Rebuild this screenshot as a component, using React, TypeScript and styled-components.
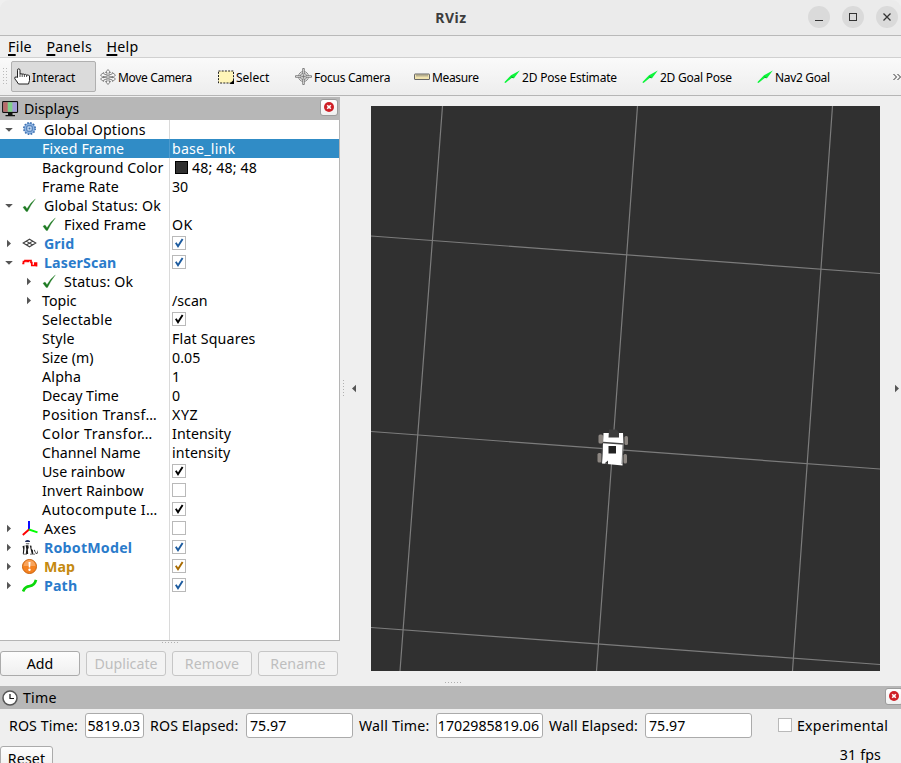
import React from "react";
import styled, { createGlobalStyle, css } from "styled-components";

const GlobalStyle = createGlobalStyle`
  *, *::before, *::after { box-sizing: border-box; }
  body {
    margin: 0;
    overflow: hidden;
    background: #efefef;
    color: #000;
    font-family: "Noto Sans", "Open Sans", sans-serif;
    font-size: 14.2px;
    line-height: 19px;
  }
  svg { display: block; flex: none; }
`;

const Window = styled.div`
  width: 901px;
  height: 763px;
  display: flex;
  flex-direction: column;
  overflow: hidden;
  white-space: nowrap;
`;

const Label = styled.span<{ $ls?: number }>`
  letter-spacing: ${(p) => p.$ls ?? 0}px;
`;

/* ---------- title bar ---------- */
const TitleBar = styled.header`
  height: 36px;
  flex: none;
  display: grid;
  grid-template-columns: 1fr auto 1fr;
  align-items: center;
  background: #ebebeb;
  border-bottom: 1px solid #b9b9b9;
  border-radius: 9px 9px 0 0;
`;
const Title = styled.h1`
  grid-column: 2;
  margin: 0;
  padding-left: 1px;
  font-size: 14px;
  font-weight: 700;
  letter-spacing: 0.5px;
  color: #3d3d3d;
`;
const WindowButtons = styled.div`
  display: flex;
  justify-content: flex-end;
  gap: 12px;
  padding: 0 3px 1px 0;
`;
const WindowButton = styled.button`
  width: 22px;
  height: 22px;
  padding: 0;
  border: 0;
  border-radius: 50%;
  background: #dadada;
`;

/* ---------- menu bar ---------- */
const MenuBar = styled.nav`
  height: 22px;
  flex: none;
  display: flex;
  align-items: center;
  gap: 14.5px;
  padding-left: 8px;
  background: #efefef;
  border-bottom: 1px solid #d0d0d0;
`;
const MenuItem = styled.span`
  letter-spacing: 0.3px;
  &::first-letter {
    text-decoration: underline;
    text-decoration-thickness: 1.5px;
    text-underline-offset: 2px;
  }
`;

/* ---------- tool bar ---------- */
const ToolBar = styled.div`
  height: 38px;
  flex: none;
  display: flex;
  align-items: center;
  background: linear-gradient(#fafafa, #ededed);
  border-bottom: 1px solid #b5b5b5;
  font-size: 12px;
  line-height: 16px;
`;
const Handle = styled.div`
  width: 4px;
  height: 17px;
  margin: 0 4px 0 3px;
  background: radial-gradient(circle at 0.5px 0.5px, #bbb 0.6px, transparent 0.9px) 0 0 / 3px 3px;
`;
const Tool = styled.button<{ $width: number; $active?: boolean; $ls?: number }>`
  width: ${(p) => p.$width}px;
  height: 31px;
  flex: none;
  display: flex;
  align-items: center;
  gap: 2px;
  padding: 0 0 0 3px;
  border: 1px solid transparent;
  border-radius: 2px;
  background: transparent;
  color: #000;
  font: inherit;
  letter-spacing: ${(p) => p.$ls ?? 0}px;
  ${(p) => p.$active && css`
    gap: 1px;
    padding-left: 2px;
    background: #dbdbdb;
    border-color: #b0b0b0;
  `}
`;
const ToolText = styled.span`
  padding-top: 2px;
`;
const Overflow = styled.div`
  margin-left: auto;
  margin-right: -1px;
`;

/* ---------- central area ---------- */
const Main = styled.main`
  height: 590px;
  flex: none;
  display: flex;
`;
const Dock = styled.section`
  width: 340px;
  flex: none;
  padding-top: 1px;
`;
const DockHeader = styled.div`
  height: 23px;
  display: flex;
  align-items: center;
  gap: 5px;
  padding-left: 2px;
  background: #b7b7b7;
`;
const CloseButton = styled.button<{ $right: number }>`
  width: 18px;
  height: 17px;
  display: grid;
  place-items: center;
  padding: 0;
  margin: 0 ${(p) => p.$right}px 3px auto;
  border: 1px solid #9c9c9c;
  border-radius: 3px;
  background: linear-gradient(#fff, #f0f0f0);
`;
const Tree = styled.div`
  height: 521px;
  display: flex;
  flex-direction: column;
  background: linear-gradient(90deg, transparent 169px, #dadada 169px, #dadada 170px, transparent 170px) #fff;
  border-right: 1px solid #b5b5b5;
  border-bottom: 1px solid #b5b5b5;
`;
const Row = styled.div<{ $selected?: boolean }>`
  height: 19px;
  flex: none;
  display: grid;
  grid-template-columns: 169px 1fr;
  ${(p) => p.$selected && css`
    background: linear-gradient(90deg, transparent 169px, #4c9ace 169px, #4c9ace 170px, transparent 170px) #308cc6;
    color: #fff;
  `}
`;
const NameCell = styled.div<{ $indent: number; $color?: string; $ls?: number }>`
  display: flex;
  align-items: center;
  padding-left: ${(p) => p.$indent}px;
  letter-spacing: ${(p) => p.$ls ?? 0}px;
  ${(p) => p.$color && css`color: ${p.$color}; font-weight: 700;`}
`;
const Arrow = styled.span`
  width: 18px;
  flex: none;
`;
const IconSlot = styled.span`
  width: 22px;
  flex: none;
`;
const ValueCell = styled.div<{ $ls?: number }>`
  display: flex;
  align-items: center;
  gap: 4px;
  padding-left: 3px;
  letter-spacing: ${(p) => p.$ls ?? 0}px;
`;
const Swatch = styled.span`
  width: 13px;
  height: 13px;
  margin-left: 3px;
  border: 1px solid #000;
  background: #303030;
`;
const CheckBox = styled.span`
  width: 14px;
  height: 14px;
  flex: none;
  margin-bottom: 1px;
  border: 1px solid #b9b9b9;
  background: #fff;
`;
const Dots = styled.div<{ $left: number; $top: number }>`
  width: 17px;
  height: 1px;
  margin: ${(p) => p.$top}px 0 0 ${(p) => p.$left}px;
  background: repeating-linear-gradient(90deg, #b0b0b0 0 1px, transparent 1px 3px);
`;
const ButtonRow = styled.div`
  display: flex;
  gap: 6px;
  margin-top: 8px;
`;
const PushButton = styled.button<{ $width: number; $ls?: number }>`
  width: ${(p) => p.$width}px;
  height: 25px;
  flex: none;
  padding: 0;
  border: 1px solid #ababab;
  border-radius: 3px;
  background: linear-gradient(#fdfdfd, #efefef);
  color: #000;
  font: inherit;
  letter-spacing: ${(p) => p.$ls ?? 0}px;
  &:disabled { color: #bebebe; border-color: #c6c6c6; background: #f3f3f3; }
`;
const Gutter = styled.div<{ $width: number }>`
  width: ${(p) => p.$width}px;
  flex: none;
  display: flex;
  align-items: center;
  justify-content: flex-end;
  padding-bottom: 5px;
`;
const SideDots = styled.div`
  width: 1px;
  height: 17px;
  margin-right: 6px;
  background: repeating-linear-gradient(#b0b0b0 0 1px, transparent 1px 3px);
`;
const Center = styled.div`
  width: 509px;
  flex: none;
  padding-top: 10px;
`;

/* ---------- time panel ---------- */
const TimePanel = styled.section`
  flex: 1;
`;
const TimeRow = styled.div`
  height: 25px;
  display: flex;
  align-items: center;
  margin-top: 4px;
  padding-left: 9px;
`;
const FieldLabel = styled.label<{ $width: number; $ls?: number }>`
  width: ${(p) => p.$width}px;
  flex: none;
  letter-spacing: ${(p) => p.$ls ?? 0}px;
`;
const Field = styled.div<{ $width: number; $end?: boolean; $ls?: number }>`
  width: ${(p) => p.$width}px;
  height: 25px;
  flex: none;
  display: flex;
  align-items: center;
  justify-content: ${(p) => (p.$end ? "flex-end" : "flex-start")};
  margin-right: 6px;
  padding: 0 3px;
  border: 1px solid #ababab;
  border-radius: 3px;
  background: #fff;
  overflow: hidden;
  letter-spacing: ${(p) => p.$ls ?? 0}px;
`;
const ExperimentalBox = styled.div`
  display: flex;
  align-items: center;
  gap: 5px;
  margin-left: 20px;
`;
const StatusRow = styled.div`
  height: 17px;
  display: flex;
  justify-content: space-between;
  align-items: flex-start;
  line-height: 17px;
  padding-right: 20px;
  margin-top: 8px;
`;

/* ---------- icons ---------- */
const HandIcon = () => (
  <svg width="17" height="17" viewBox="0 0 17 17" fill="#fff" stroke="#222" strokeWidth="1">
    <path d="M3.500 9.500V2.200Q3.500.8 4.700.8T6 2.200V6q1-.8 2 .2 1.200-.7 2.200.3 1.200-.6 2.300.5Q15 6.500 15.500 8v4.500L14.500 16H4.500L2.500 13 .8 10.800Q.3 8.500 2.300 9z" />
    <path d="M6 6v3M8.200 6.300V9M10.400 6.600V9M12.600 7v2" strokeWidth=".8" />
  </svg>
);
const MoveIcon = () => (
  <svg width="16" height="16" viewBox="0 0 16 16" fill="#f6f6f6" stroke="#777" strokeWidth=".9">
    <path d="M8 .5 10.500 3.500H9v2.700l3.300-1.400V3.500L15.500 6l-3 3V7.500L10 8l2.500.8V7.500L15.500 10l-3 2.500-.2-1.500L9 9.800v2.700h1.500L8 15.500 5.500 12.500H7V9.800L3.700 11l-.2 1.500L.5 10l3-2.500v1.300L6 8l-2.500-.5V9l-3-3 3.200-2.500v1.300L7 6.200V3.500H5.500z" />
    <circle cx="8" cy="8" r="1.400" />
  </svg>
);
const SelectIcon = () => (
  <svg width="16" height="14" viewBox="0 0 16 14">
    <rect x=".5" y="1" width="15" height="12" fill="#fff5b8" stroke="#222" strokeDasharray="2 1.200" />
    <path d="M16 9.500V14h-4.500z" />
  </svg>
);
const FocusIcon = () => (
  <svg width="17" height="17" viewBox="0 0 17 17" fill="none" stroke="#777" strokeWidth=".9">
    <circle cx="8.500" cy="8.500" r="5" />
    <circle cx="8.500" cy="8.500" r="3.200" />
    <path d="M7.700 .5h1.600v5.700H7.700zM7.700 10.800h1.600v5.700H7.700zM.5 7.700h5.700v1.600H.5zM10.800 7.700h5.700v1.600h-5.700z" fill="#f5f5f5" />
    <circle cx="8.500" cy="8.500" r="1" fill="#777" />
  </svg>
);
const RulerIcon = () => (
  <svg width="16" height="16" viewBox="0 0 16 16">
    <rect x=".5" y="5" width="15" height="5.500" rx=".5" fill="#f0e3ae" stroke="#666" />
    <path d="M3 5.500v2M5 5.500v2M7 5.500v2M9 5.500v2M11 5.500v2M13 5.500v2" stroke="#666" strokeWidth=".8" />
  </svg>
);
const PoseIcon = () => (
  <svg width="16" height="16" viewBox="0 0 16 16">
    <path d="M.3 13.200 7 6.200 15.800 1.500 10 9.300 8.300 8.500 1.500 14z" fill="#0cf53a" />
    <path d="M7.500 7.300 10 9.300 8.300 8.900 7.300 8.200z" fill="#0a8a25" />
  </svg>
);
const MonitorIcon = () => (
  <svg width="17" height="17" viewBox="0 0 17 17">
    <rect x=".7" y="1.700" width="14.800" height="10.600" rx=".5" stroke="#111" strokeWidth="1.200" fill="#aaa" />
    <rect x="1.300" y="2.300" width="4.500" height="9.400" fill="#b86a6a" />
    <rect x="5.800" y="2.300" width="4.700" height="9.400" fill="#7fd18a" />
    <rect x="10.500" y="2.300" width="4.500" height="9.400" fill="#a29bd8" />
    <path d="M6 13h4.500v2H13v1.300H3.500V15H6z" fill="#111" />
  </svg>
);
const CloseIcon = () => (
  <svg width="12" height="12" viewBox="0 0 12 12">
    <circle cx="6" cy="6" r="5" fill="#cf2027" />
    <path d="M4.200 4.200 7.800 7.800M7.800 4.200 4.200 7.800" stroke="#fff" strokeWidth="1.600" />
  </svg>
);
const GearIcon = () => (
  <svg width="15" height="17" viewBox="0 0 15 17">
    <circle cx="7.500" cy="7.500" r="5.700" fill="#82abdc" stroke="#3f71b0" strokeWidth="1.600" strokeDasharray="1.600 1.380" />
    <circle cx="7.500" cy="7.500" r="4.600" fill="#8fb5e3" />
    <rect x="4.800" y="4.800" width="5.400" height="5.400" rx="1.200" fill="#c4daf2" stroke="#3f71b0" />
    <circle cx="7.500" cy="7.500" r="1" fill="#3f71b0" />
  </svg>
);
const OkIcon = () => (
  <svg width="14" height="15" viewBox="0 0 14 15">
    <path d="M1 9.300 3 8l2 2.700Q8 5 13.300 1 8.800 6.500 5.500 13.500H4.200z" fill="#1d7a22" stroke="#1d7a22" strokeWidth=".3" />
  </svg>
);
const GridIcon = () => (
  <svg width="15" height="15" viewBox="0 0 15 15" fill="none" stroke="#444" strokeWidth="1.100">
    <path d="M1.200 7 7.500 3.200 13.800 7 7.500 10.800zM4.200 5.100l6.500 3.900M10.800 5.100l-6.500 3.900" />
  </svg>
);
const LaserIcon = () => (
  <svg width="17" height="15" viewBox="0 0 17 15" fill="none" stroke="#f00" strokeWidth="1.700">
    <path d="M.3 8.500H1.500V6.500H3V5.500H5V6.500H6.500V5.500H9V7.500H9.800V10.500H12.800V8H14.500V11.500" />
  </svg>
);
const AxesIcon = () => (
  <svg width="17" height="16" viewBox="0 0 17 16" fill="none" strokeWidth="1.900">
    <path d="M7 9v-9" stroke="#00f" />
    <path d="M7 8.500.8 14" stroke="#f00" />
    <path d="M7 8.500 15.500 11.300" stroke="#0f0" />
  </svg>
);
const RobotIcon = () => (
  <svg width="17" height="17" viewBox="0 0 17 17">
    <path d="M3.200 2Q5.500 .2 8 2v.9H3.200z" fill="#24305e" />
    <path d="M3.700 4.200h3.800L6.800 5.300H4.300z" fill="#555" />
    <path d="M.5 7.200 2.500 6.500v3L1.800 15H.8L1.200 10zM3.600 6.200h2.800l.3 2.500-.9 1.800.4 4.500H3.800l.5-5zM7.800 6.500l1.700.3v3l1.400 1.500.4 3.700H9.800L8.800 11zM12 11.500l.8-1 .8 3 1 .7 1.300-3.200-.3 3.500-1.600.5z" fill="#1b1b1b" />
    <path d="M1 15.200h4M8 15.200h5" stroke="#555" strokeWidth=".8" />
  </svg>
);
const WarnIcon = () => (
  <svg width="16" height="16" viewBox="0 0 16 16">
    <circle cx="7.500" cy="7.500" r="7" fill="#f58220" stroke="#c9620c" />
    <path d="M1.500 7a6 6 0 0 1 12 0z" fill="#f9a45c" />
    <path d="M6.500 3h2l-.3 5.500H6.800z" fill="#fff" />
    <circle cx="7.500" cy="10.800" r="1.200" fill="#fff" />
  </svg>
);
const PathIcon = () => (
  <svg width="16" height="16" viewBox="0 0 16 16" fill="none" stroke="#0bd80b" strokeWidth="2.700">
    <path d="M1 13.500Q3 8.700 7.500 8.200 12.500 7.500 14 1.800" />
  </svg>
);
const ClockIcon = () => (
  <svg width="16" height="16" viewBox="0 0 16 16">
    <circle cx="8" cy="8" r="7" fill="#fff" stroke="#555" strokeWidth="1.500" />
    <path d="M8 4v4.500h4" fill="none" stroke="#111" strokeWidth="1.200" />
  </svg>
);
const Triangle = ({ dir }: { dir: "right" | "down" | "left" }) => (
  <svg width="9" height="9" viewBox="0 0 9 9" fill="#555">
    <path d={{ right: "M3 .8 7 4.500 3 8.200z", down: "M1.200 3h7.600L5 6.700z", left: "M6 .8 2 4.500 6 8.200z" }[dir]} />
  </svg>
);
const Tick = ({ color }: { color: string }) => (
  <svg width="12" height="12" viewBox="0 0 12 12" fill="none" stroke={color}>
    <path d="M2.800 5.800 5 9.200 9.600 2" strokeWidth="1.900" />
  </svg>
);

/* ---------- data ---------- */
const BLUE = "#2a7bcb";
const AMBER = "#c58a10";

type Item = {
  name: string;
  depth?: number;
  arrow?: "right" | "down";
  icon?: React.ReactNode;
  color?: string;
  value?: string;
  swatch?: boolean;
  check?: string | false;
  selected?: boolean;
  ls?: number;
  vls?: number;
};

const items: Item[] = [
  { name: "Global Options", arrow: "down", icon: <GearIcon />, ls: 0.16 },
  { name: "Fixed Frame", depth: 1, value: "base_link", selected: true, ls: 0.12, vls: 0.2 },
  { name: "Background Color", depth: 1, value: "48; 48; 48", swatch: true, ls: 0.08, vls: 0.12 },
  { name: "Frame Rate", depth: 1, value: "30", ls: 0.12 },
  { name: "Global Status: Ok", arrow: "down", icon: <OkIcon />, ls: 0.15 },
  { name: "Fixed Frame", depth: 1, icon: <OkIcon />, value: "OK", ls: 0.12, vls: 0.4 },
  { name: "Grid", arrow: "right", icon: <GridIcon />, color: BLUE, check: "#1c5b9f", ls: 0.1 },
  { name: "LaserScan", arrow: "down", icon: <LaserIcon />, color: BLUE, check: "#1c5b9f", ls: 0.14 },
  { name: "Status: Ok", depth: 1, arrow: "right", icon: <OkIcon />, ls: 0.14 },
  { name: "Topic", depth: 1, arrow: "right", value: "/scan" },
  { name: "Selectable", depth: 1, check: "#000", ls: 0.28 },
  { name: "Style", depth: 1, value: "Flat Squares", ls: 0.2, vls: 0.18 },
  { name: "Size (m)", depth: 1, value: "0.05", vls: 0.1 },
  { name: "Alpha", depth: 1, value: "1", ls: 0.2 },
  { name: "Decay Time", depth: 1, value: "0" },
  { name: "Position Transf…", depth: 1, value: "XYZ", ls: 0.34, vls: 0.6 },
  { name: "Color Transfor…", depth: 1, value: "Intensity", ls: 0.45, vls: 0.08 },
  { name: "Channel Name", depth: 1, value: "intensity", vls: 0.14 },
  { name: "Use rainbow", depth: 1, check: "#000" },
  { name: "Invert Rainbow", depth: 1, check: false, ls: 0.06 },
  { name: "Autocompute I…", depth: 1, check: "#000", ls: 0.36 },
  { name: "Axes", arrow: "right", icon: <AxesIcon />, check: false, ls: 0.3 },
  { name: "RobotModel", arrow: "right", icon: <RobotIcon />, color: BLUE, check: "#1c5b9f", ls: 0.22 },
  { name: "Map", arrow: "right", icon: <WarnIcon />, color: AMBER, check: "#a86a00" },
  { name: "Path", arrow: "right", icon: <PathIcon />, color: BLUE, check: "#1c5b9f", ls: 0.15 },
];

const tools = [
  { label: "Interact", icon: <HandIcon />, width: 85, active: true, ls: -0.1 },
  { label: "Move Camera", icon: <MoveIcon />, width: 118, ls: -0.33 },
  { label: "Select", icon: <SelectIcon />, width: 77 },
  { label: "Focus Camera", icon: <FocusIcon />, width: 119, ls: -0.25 },
  { label: "Measure", icon: <RulerIcon />, width: 90, ls: -0.35 },
  { label: "2D Pose Estimate", icon: <PoseIcon />, width: 138, ls: -0.18 },
  { label: "2D Goal Pose", icon: <PoseIcon />, width: 115, ls: -0.25 },
  { label: "Nav2 Goal", icon: <PoseIcon />, width: 95, ls: -0.33 },
];

const Viewport = () => (
  <svg width="509" height="565" viewBox="0 0 509 565">
    <rect width="509" height="565" fill="#303030" />
    <g stroke="#7c7c7c" strokeWidth="1.200">
      <path d="M71.500 0 29 565M266.500 0 225.500 565M461.500 0 421.500 565" />
      <path d="M0 130 509 167.500M0 325.500 509 363M0 521.500 509 558.500" />
    </g>
    <g>
      <rect x="227.500" y="328.500" width="4.500" height="9" rx="1.500" fill="#8d8782" />
      <rect x="253.500" y="330" width="3.500" height="9" rx="1.500" fill="#8d8782" />
      <rect x="226.500" y="347" width="4" height="9.500" rx="1.500" fill="#8d8782" />
      <rect x="252.500" y="348" width="3.500" height="9.500" rx="1.500" fill="#8d8782" />
      <path d="M232.500 327h19.500l.5 11-1 21.500-20.500-2 1-19z" fill="#fff" />
      <path d="M232 336.500 252.500 338" stroke="#444" strokeWidth="1.400" />
      <path d="M231.500 338.500 230.500 357M252 338.500 251 358" stroke="#555" strokeWidth=".8" />
      <path d="M238 323.500h7.500l2.500 3v5h-10.500z" fill="#3c3c3c" />
      <rect x="237.500" y="340" width="7.500" height="7.500" fill="#222" />
      <path d="m233.500 357.500 3.500-3v3.500z" fill="#333" />
    </g>
  </svg>
);

export default function App() {
  return (
    <>
      <GlobalStyle />
      <Window>
        <TitleBar>
          <Title>RViz</Title>
          <WindowButtons>
            <WindowButton aria-label="Minimize">
              <svg width="22" height="22"><path d="M7 14.500h8" stroke="#333" /></svg>
            </WindowButton>
            <WindowButton aria-label="Maximize">
              <svg width="22" height="22"><rect x="7.500" y="7.500" width="7" height="7" fill="none" stroke="#333" /></svg>
            </WindowButton>
            <WindowButton aria-label="Close">
              <svg width="22" height="22"><path d="M7.500 7.500l7 7M14.500 7.500l-7 7" stroke="#333" strokeWidth="1.300" /></svg>
            </WindowButton>
          </WindowButtons>
        </TitleBar>
        <MenuBar>
          <MenuItem>File</MenuItem>
          <MenuItem>Panels</MenuItem>
          <MenuItem>Help</MenuItem>
        </MenuBar>
        <ToolBar>
          <Handle />
          {tools.map((t) => (
            <Tool key={t.label} $width={t.width} $active={t.active} $ls={t.ls}>
              {t.icon}
              <ToolText>{t.label}</ToolText>
            </Tool>
          ))}
          <Overflow>
            <svg width="10" height="10" viewBox="0 0 10 10" fill="none" stroke="#333"><path d="M1.500 2l3 3-3 3M5.500 2l3 3-3 3" /></svg>
          </Overflow>
        </ToolBar>
        <Main>
          <Dock>
            <DockHeader>
              <MonitorIcon />
              <Label>Displays</Label>
              <CloseButton $right={2} aria-label="Close displays"><CloseIcon /></CloseButton>
            </DockHeader>
            <Tree>
              {items.map((it, i) => {
                const depth = it.depth ?? 0;
                const indent = 4 + depth * 20;
                return (
                  <Row key={i} $selected={it.selected}>
                    <NameCell $indent={indent} $color={it.color} $ls={it.ls}>
                      <Arrow>{it.arrow && <Triangle dir={it.arrow} />}</Arrow>
                      {it.icon && <IconSlot>{it.icon}</IconSlot>}
                      {it.name}
                    </NameCell>
                    <ValueCell $ls={it.vls}>
                      {it.swatch && <Swatch />}
                      {it.check !== undefined && <CheckBox>{it.check && <Tick color={it.check} />}</CheckBox>}
                      {it.value}
                    </ValueCell>
                  </Row>
                );
              })}
            </Tree>
            <Dots $left={162} $top={1} />
            <ButtonRow>
              <PushButton $width={80}>Add</PushButton>
              <PushButton $width={80} disabled>Duplicate</PushButton>
              <PushButton $width={80} $ls={0.15} disabled>Remove</PushButton>
              <PushButton $width={80} $ls={0.1} disabled>Rename</PushButton>
            </ButtonRow>
          </Dock>
          <Gutter $width={31}>
            <SideDots />
            <Triangle dir="left" />
            <svg width="12" height="1" />
          </Gutter>
          <Center>
            <Viewport />
            <Dots $left={74} $top={11} />
          </Center>
          <Gutter $width={21}>
            <Triangle dir="right" />
          </Gutter>
        </Main>
        <TimePanel>
          <DockHeader>
            <ClockIcon />
            <Label $ls={0.2}>Time</Label>
            <CloseButton $right={-2} aria-label="Close time"><CloseIcon /></CloseButton>
          </DockHeader>
          <TimeRow>
            <FieldLabel $width={76} $ls={0.1}>ROS Time:</FieldLabel>
            <Field $width={59} $end>5819.03</Field>
            <FieldLabel $width={96} $ls={0.12}>ROS Elapsed:</FieldLabel>
            <Field $width={107}>75.97</Field>
            <FieldLabel $width={77} $ls={0.2}>Wall Time:</FieldLabel>
            <Field $width={107} $end>1702985819.06</Field>
            <FieldLabel $width={96} $ls={0.12}>Wall Elapsed:</FieldLabel>
            <Field $width={107}>75.97</Field>
            <ExperimentalBox>
              <CheckBox />
              <Label $ls={0.22}>Experimental</Label>
            </ExperimentalBox>
          </TimeRow>
          <StatusRow>
            <PushButton $width={53} $ls={0.15}>Reset</PushButton>
            <Label $ls={0.15}>31 fps</Label>
          </StatusRow>
        </TimePanel>
      </Window>
    </>
  );
}
